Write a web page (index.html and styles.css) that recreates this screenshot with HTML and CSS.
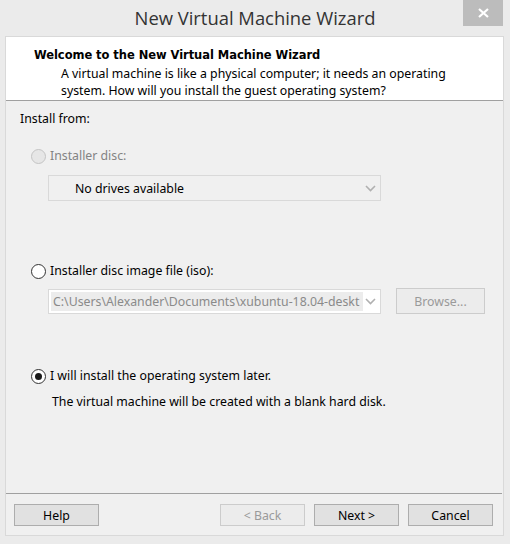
FILE: index.html
```html
<!DOCTYPE html>
<html>
<head>
<meta charset="utf-8">
<link rel="stylesheet" href="styles.css">
</head>
<body>
<div class="window">
  <div class="titlebar">
    <div class="spacer"></div>
    <div class="title">New Virtual Machine Wizard</div>
    <div class="controls">
      <div class="close">
        <svg width="11" height="10" viewBox="0 0 11 10"><path d="M1 1 L10 9 M10 1 L1 9" stroke="#fff" stroke-width="2.2" fill="none"/></svg>
      </div>
    </div>
  </div>
  <div class="client">
    <div class="header">
      <div class="heading">Welcome to the New Virtual Machine Wizard</div>
      <div class="desc">A virtual machine is like a physical computer; it needs an operating<br>system. How will you install the guest operating system?</div>
    </div>
    <div class="body">
      <div class="label">Install from:</div>
      <div class="option disabled opt1">
        <span class="radio"></span><span>Installer disc:</span>
      </div>
      <div class="combo combo1">
        <span class="combo-text">No drives available</span>
        <svg class="chev" width="11" height="7" viewBox="0 0 11 7"><path d="M1 1 L5.5 5.5 L10 1" stroke="#b0b0b0" stroke-width="1.6" fill="none"/></svg>
      </div>
      <div class="option opt2">
        <span class="radio"></span><span>Installer disc image file (iso):</span>
      </div>
      <div class="iso-row">
        <div class="combo combo2">
          <span class="combo-text path">C:\Users\Alexander\Documents\xubuntu-18.04-deskt</span>
          <svg class="chev" width="11" height="7" viewBox="0 0 11 7"><path d="M1 1 L5.5 5.5 L10 1" stroke="#b0b0b0" stroke-width="1.6" fill="none"/></svg>
        </div>
        <div class="btn disabled browse">Browse...</div>
      </div>
      <div class="option opt3">
        <span class="radio checked"></span><span>I will install the operating system later.</span>
      </div>
      <div class="note">The virtual machine will be created with a blank hard disk.</div>
    </div>
    <div class="footer">
      <div class="btn">Help</div>
      <div class="grow"></div>
      <div class="btn disabled">&lt; Back</div>
      <div class="btn">Next &gt;</div>
      <div class="btn">Cancel</div>
    </div>
  </div>
</div>
</body>
</html>
```
FILE: styles.css
```css
html, body {
  margin: 0;
  padding: 0;
}
body {
  width: 510px;
  height: 544px;
  background: #ebebeb;
  font-family: "Noto Sans", "Open Sans", sans-serif;
  font-size: 12.3px;
  color: #000;
  overflow: hidden;
}
.window {
  display: flex;
  flex-direction: column;
  height: 544px;
}
.titlebar {
  height: 36px;
  display: grid;
  grid-template-columns: 1fr auto 1fr;
}
.title {
  font-size: 18.4px;
  color: #333;
  line-height: 36px;
  font-family: "Open Sans", sans-serif;
}
.controls {
  display: flex;
  justify-content: flex-end;
  padding-right: 7px;
}
.close {
  width: 40px;
  height: 26px;
  background: #bcbcbc;
  display: flex;
  align-items: center;
  justify-content: center;
}
.client {
  margin-left: 5px;
  width: 497px;
  height: 498px;
  border: 1px solid #d9d9d9;
  background: #f0f0f0;
  display: flex;
  flex-direction: column;
}
.header {
  background: #fff;
  height: 64px;
  box-sizing: border-box;
  border-bottom: 1px solid #a0a0a0;
  padding: 10px 0 0 28px;
}
.heading {
  font-family: "DejaVu Sans", sans-serif;
  font-weight: bold;
  font-size: 11.5px;
  line-height: 16px;
  letter-spacing: -0.05px;
}
.desc {
  padding-left: 27px;
  line-height: 16.5px;
  margin-top: 3px;
}
.body {
  flex: 1;
  padding: 10px 0 0 14px;
  display: flex;
  flex-direction: column;
}
.label {
  line-height: 16px;
}
.option {
  display: flex;
  align-items: center;
  gap: 4px;
  padding-left: 11px;
  line-height: 16px;
}
.opt1 { margin-top: 21px; }
.opt2 { margin-top: 62px; }
.opt3 { margin-top: 54px; }
.disabled { color: #838383; }
.radio {
  width: 13px;
  height: 13px;
  border: 1px solid #333;
  border-radius: 50%;
  background: #fff;
  display: inline-flex;
  align-items: center;
  justify-content: center;
}
.disabled .radio {
  border-color: #c4c4c4;
  background: #e6e6e6;
}
.radio.checked::after {
  content: "";
  width: 7px;
  height: 7px;
  border-radius: 50%;
  background: #1a1a1a;
}
.combo {
  box-sizing: border-box;
  width: 333px;
  height: 26px;
  border: 1px solid #d9d9d9;
  display: flex;
  align-items: center;
  margin-left: 28px;
}
.combo1 {
  margin-top: 11px;
  padding-left: 26px;
}
.combo-text {
  flex: 1;
}
.chev {
  margin-right: 4px;
}
.combo2 {
  background: #fff;
  padding: 2px 0 2px 2px;
  height: 25px;
}
.path {
  color: #8a8a8a;
  background: #ececec;
  align-self: stretch;
  display: flex;
  align-items: center;
  padding-left: 2px;
  white-space: nowrap;
  overflow: hidden;
  margin-right: 2px;
}
.iso-row {
  display: flex;
  align-items: center;
  margin-top: 9px;
  gap: 15px;
}
.btn {
  box-sizing: border-box;
  width: 85px;
  height: 22px;
  border: 1px solid #adadad;
  background: #e1e1e1;
  display: flex;
  align-items: center;
  justify-content: center;
}
.btn.disabled {
  border-color: #cccccc;
  background: #ececec;
  color: #9a9a9a;
}
.browse {
  width: 89px;
  height: 26px;
}
.note {
  margin-top: 10px;
  padding-left: 32px;
  line-height: 16px;
}
.footer {
  box-sizing: border-box;
  height: 42px;
  border-top: 1px solid #a0a0a0;
  margin: 0 1px 0 0;
  display: flex;
  align-items: flex-start;
  padding: 10px 9px 0 8px;
  gap: 9px;
}
.grow { flex: 1; }
```
